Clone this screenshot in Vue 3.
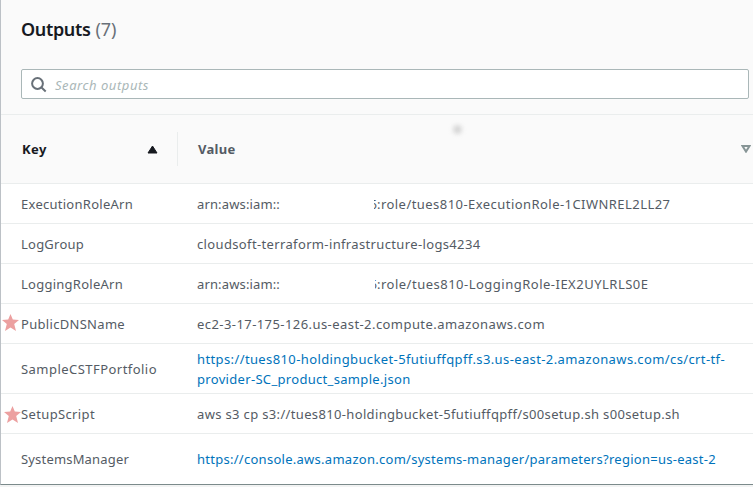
<script setup>
const rows = [
  { key: 'ExecutionRoleArn', kw: 112, account: true, tail: ':role/tues810-ExecutionRole-1CIWNREL2LL27', tw: 293.5, sliver: 3 },
  { key: 'LogGroup', kw: 63, lines: [['cloudsoft-terraform-infrastructure-logs4234', 283.5]] },
  { key: 'LoggingRoleArn', kw: 102, account: true, tail: ':role/tues810-LoggingRole-IEX2UYLRLS0E', tw: 271.5, sliver: 2 },
  { key: 'PublicDNSName', kw: 104, star: 'near', lines: [['ec2-3-17-175-126.us-east-2.compute.amazonaws.com', 348]] },
  {
    key: 'SampleCSTFPortfolio', kw: 136, link: true, size: 'tall',
    lines: [
      ['https://tues810-holdingbucket-5futiuffqpff.s3.us-east-2.amazonaws.com/cs/crt-tf-', 528],
      ['provider-SC_product_sample.json', 213.5],
    ],
  },
  { key: 'SetupScript', kw: 74, star: 'far', lines: [['aws s3 cp s3://tues810-holdingbucket-5futiuffqpff/s00setup.sh s00setup.sh', 483]] },
  { key: 'SystemsManager', kw: 108, link: true, size: 'last', lines: [['https://console.aws.amazon.com/systems-manager/parameters?region=us-east-2', 519]] },
]

// Tracks a label out or in so that it spans the given width.
const vFit = {
  mounted(el, { value }) {
    const natural = el.getBoundingClientRect().width
    el.style.letterSpacing = `${(value - natural) / el.textContent.length}px`
  },
}
</script>

<template>
  <section class="panel">
    <header class="top">
      <h2><span v-fit="69.5" class="title">Outputs</span><span v-fit="21" class="count">(7)</span></h2>
      <div class="search">
        <svg class="lens" width="16" height="16" viewBox="0 0 16 16">
          <circle cx="6.5" cy="6.5" r="5.4" />
          <path d="M10.5 10.5L14.7 14.5" />
        </svg>
        <span v-fit="94" class="placeholder">Search outputs</span>
      </div>
    </header>

    <div class="head">
      <div class="head-key">
        <span v-fit="25">Key</span>
        <svg width="11" height="9" viewBox="0 0 11 9"><path d="M5.5 1L10 8H1Z" fill="#16191f" stroke="#16191f" stroke-linejoin="round" /></svg>
      </div>
      <div class="head-value">
        <span v-fit="37.5">Value</span>
        <svg width="10" height="8" viewBox="0 0 10 8"><path d="M1.5 1H8.5L5 6.6Z" fill="none" stroke="#879596" stroke-width="2" /></svg>
      </div>
      <i class="smudge"></i>
    </div>

    <div v-for="row in rows" :key="row.key" class="row" :class="row.size">
      <div class="key">
        <svg v-if="row.star" class="star" :class="row.star" width="17" height="17" viewBox="0 0 17 17">
          <path d="M8.5 0L10.8 5.6L17 6L12.2 10L14 17L8.5 13.6L3 17L4.8 10L0 6L6.2 5.6Z" />
        </svg>
        <span v-fit="row.kw">{{ row.key }}</span>
      </div>
      <div v-if="row.account" class="value arn">
        <span class="arn-start"><span v-fit="83">arn:aws:iam::</span></span>
        <span class="digit-slot"><span class="digit" :style="{ width: row.sliver + 'px' }"><b>6</b></span></span>
        <span v-fit="row.tw">{{ row.tail }}</span>
      </div>
      <div v-else class="value" :class="{ link: row.link }">
        <div v-for="line in row.lines" :key="line[0]"><span v-fit="line[1]">{{ line[0] }}</span></div>
      </div>
    </div>
  </section>
</template>

<style>
body {
  margin: 0;
  background: #f2f3f3;
}
</style>

<style scoped>
.panel {
  box-sizing: border-box;
  width: 753px;
  height: 485px;
  overflow: hidden;
  border-left: 1px solid #bcc1c6;
  border-bottom: 1px solid #7b8a8b;
  background: #fff;
  color: #545b64;
  font: 13px/20px "Noto Sans", "Open Sans", sans-serif;
  white-space: nowrap;
  box-shadow: 0 1px 1px #d5dbdb;
}
.top {
  box-sizing: border-box;
  height: 115px;
  padding: 17px 4px 0 20px;
  background: #fafafa;
  border-bottom: 1px solid #eaeded;
}
h2 {
  display: flex;
  gap: 5px;
  margin: 0 0 28px;
  font-size: 18px;
  line-height: 24px;
  font-weight: 400;
}
.title {
  color: #16191f;
  font-weight: 600;
}
.count {
  color: #687078;
}
.search {
  box-sizing: border-box;
  display: flex;
  align-items: center;
  width: 728px;
  height: 30px;
  padding: 2px 10px 0 9px;
  gap: 8px;
  background: #fff;
  border: 1px solid #aab7b8;
  border-radius: 2px;
}
.lens {
  margin-bottom: 1px;
  fill: none;
  stroke: #687078;
  stroke-width: 2;
}
.placeholder {
  color: #aab7b8;
  font-style: italic;
}
.head {
  position: relative;
  box-sizing: border-box;
  display: flex;
  align-items: center;
  height: 69px;
  background: #fafafa;
  border-bottom: 1px solid #eaeded;
  font-weight: 700;
}
.head-key,
.head-value {
  box-sizing: border-box;
  display: flex;
  align-items: center;
  justify-content: space-between;
  height: 34px;
}
.head-key {
  width: 177px;
  padding: 0 19px 0 21px;
  color: #16191f;
  border-right: 1px solid #eaeded;
}
.head-value {
  flex: 1;
  padding: 0 2px 0 20px;
}
.smudge {
  position: absolute;
  left: 452px;
  top: 10px;
  width: 9px;
  height: 9px;
  border-radius: 50%;
  background: #d6d6d6;
  filter: blur(2px);
}
.row {
  position: relative;
  box-sizing: border-box;
  display: flex;
  align-items: center;
  height: 40px;
  padding-top: 1px;
  border-bottom: 1px solid #eaeded;
}
.tall {
  height: 50px;
}
.last {
  height: 50px;
  padding-top: 0;
  border-bottom: 0;
}
.key {
  box-sizing: border-box;
  width: 196px;
  padding-left: 20px;
}
.link {
  color: #0073bb;
}
.arn {
  display: flex;
}
.arn-start {
  width: 176px;
}
.digit-slot {
  display: flex;
  justify-content: flex-end;
  width: 4px;
}
.digit {
  display: flex;
  justify-content: flex-end;
  overflow: hidden;
}
.digit b {
  font-weight: 400;
}
.star {
  position: absolute;
  top: 10px;
  left: 1px;
  fill: #eca0a0;
}
.far {
  left: 3px;
  top: 12px;
}
</style>
